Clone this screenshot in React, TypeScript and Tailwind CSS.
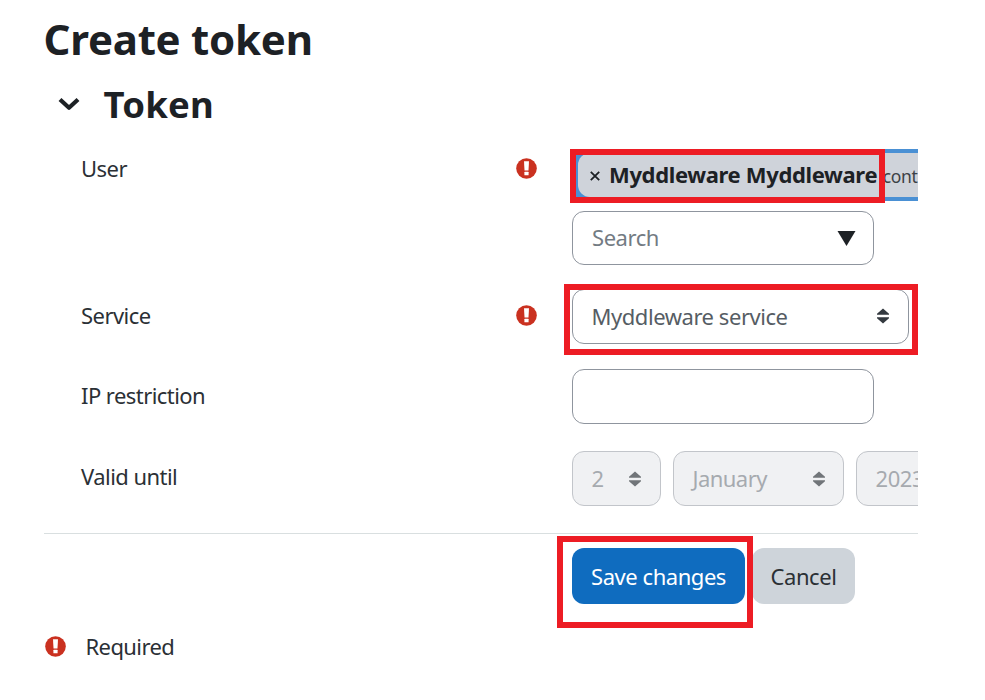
import type { ReactNode } from "react";

function RequiredIcon() {
  return (
    <svg className="block h-[21px] w-[21px] shrink-0" viewBox="0 0 21 21">
      <circle cx="10.5" cy="10.5" r="10.3" fill="#ca3120" />
      <path d="M8 3.2h5l-.5 9.2h-4z" fill="#fff" />
      <rect x="8.4" y="13.8" width="4.2" height="3.5" rx=".4" fill="#fff" />
    </svg>
  );
}

function Sort({ className }: { className: string }) {
  return (
    <svg className={`block h-[16px] w-[12px] shrink-0 ${className}`} viewBox="0 0 12 16" fill="currentColor">
      <path d="M0 6.8V5.8L6 .5l6 5.3v1zM0 9.2h12v1l-6 5.3-6-5.3z" />
    </svg>
  );
}

function Row({ label, required, className, children }: { label: string; required?: boolean; className: string; children: ReactNode }) {
  return (
    <div className={`flex ${className}`}>
      <div className="w-[434px] shrink-0 pl-[37px] leading-[42px] tracking-[-0.55px]">{label}</div>
      <div className="w-[94px] shrink-0 pt-[11px] pl-[37.5px]">{required && <RequiredIcon />}</div>
      {children}
    </div>
  );
}

export default function App() {
  return (
    <div className="h-[700px] w-[985px] overflow-hidden bg-white">
      <div className="relative h-[700px] w-[918px] overflow-hidden pl-[44px] font-['Noto_Sans','Open_Sans',sans-serif] text-[22px] tracking-[-0.45px] whitespace-nowrap text-[#2b3035]">
        <h1 className="h-[74px] pt-[10px] text-[42px] leading-[58px] font-bold tracking-[-0.25px] text-[#1d2125]">
          <span className="-ml-[0.5px]">Create token</span>
        </h1>
        <h2 className="flex h-[73px] items-start text-[36.5px] font-bold tracking-[0.2px] text-[#1d2125]">
          <svg className="mt-[23px] ml-[14px] h-[14px] w-[22px] shrink-0" viewBox="0 0 22 14" fill="none" stroke="currentColor" strokeWidth="4.2" strokeLinejoin="round">
            <path d="m2 2.5 9 8.3 9-8.3" />
          </svg>
          <span className="ml-[23.5px] leading-[60px]">Token</span>
        </h2>

        <Row label="User" required className="h-[147px]">
          <div className="min-w-0">
            <div className="mt-[1.5px] flex h-[52px] w-[346px] items-center overflow-hidden rounded-l-[12px] bg-[#4a90d4]">
              <div className="ml-[6px] flex h-[44px] w-[360px] shrink-0 items-center rounded-l-[12px] bg-[#cfd3da] pl-[12px]">
                <svg className="mt-[3px] h-[10px] w-[10px]" viewBox="0 0 10 10" stroke="#1d2125" strokeWidth="1.8">
                  <path d="m.8.8 8.4 8.4M9.2.8.8 9.2" />
                </svg>
                <span className="ml-[9px] font-bold tracking-[-0.35px] text-[#1d2125]">Myddleware Myddleware</span>
                <span className="mt-[3px] ml-[5.5px] text-[17.5px] tracking-[-0.3px] text-[#3c4146]">cont</span>
              </div>
            </div>
            <div className="mt-[10px] flex h-[54.5px] w-[302px] items-center justify-between rounded-[12px] border-[1.5px] border-[#8f959e] bg-white pr-[17px] pl-[19px]">
              <span className="text-[#737b83]">Search</span>
              <svg className="mt-px h-[15px] w-[19px]" viewBox="0 0 19 15" fill="#1d2125">
                <path d="M.5 0h18L9.5 15z" />
              </svg>
            </div>
          </div>
        </Row>

        <Row label="Service" required className="h-[80px]">
          <div className="-mt-[5.5px] flex h-[55px] w-[337px] items-center justify-between rounded-[12px] border-[1.5px] border-[#8f959e] pr-[19px] pl-[18.5px] text-[#565d64]">
            <span>Myddleware service</span>
            <Sort className="text-[#343a40]" />
          </div>
        </Row>

        <Row label="IP restriction" className="h-[81px]">
          <div className="-mt-[5.5px] h-[55px] w-[302px] rounded-[12px] border-[1.5px] border-[#8f959e]" />
        </Row>

        <Row label="Valid until" className="h-[78px]">
          <div className="-mt-[4px] flex gap-[12px] text-[#a6aaaf]">
            <div className="flex h-[55px] w-[89px] shrink-0 items-center justify-between rounded-[12px] border-[1.5px] border-[#c2c5ca] bg-[#f0f1f3] pr-[19px] pl-[18.5px]">
              <span>2</span>
              <Sort className="text-[#717579]" />
            </div>
            <div className="flex h-[55px] w-[171px] shrink-0 items-center justify-between rounded-[12px] border-[1.5px] border-[#c2c5ca] bg-[#f0f1f3] pr-[18px] pl-[18.5px]">
              <span className="tracking-[-0.55px]">January</span>
              <Sort className="text-[#717579]" />
            </div>
            <div className="flex h-[55px] w-[122px] shrink-0 items-center justify-between rounded-[12px] border-[1.5px] border-[#c2c5ca] bg-[#f0f1f3] pr-[18px] pl-[18.5px]">
              <span>2023</span>
              <Sort className="text-[#717579]" />
            </div>
          </div>
        </Row>

        <div className="flex h-[90px] border-t border-[#d9dfe0] pt-[14px] pl-[528px]">
          <button className="h-[56px] w-[173px] rounded-[12px] bg-[#0f6cbf] text-white">Save changes</button>
          <button className="ml-[7px] h-[56px] w-[103px] rounded-[12px] bg-[#ced4da]">Cancel</button>
        </div>
        <div className="flex items-center pt-px pl-px leading-[44px]">
          <RequiredIcon />
          <span className="ml-[19.5px] tracking-[-0.6px]">Required</span>
        </div>

        <div className="absolute top-[148.5px] left-[569.5px] h-[54.5px] w-[315px] border-[6px] border-[#ed1c24]" />
        <div className="absolute top-[283.5px] left-[564px] h-[71px] w-[354px] border-[6px] border-[#ed1c24]" />
        <div className="absolute top-[536px] left-[556.5px] h-[92px] w-[196.5px] border-[6px] border-[#ed1c24]" />
      </div>
    </div>
  );
}
